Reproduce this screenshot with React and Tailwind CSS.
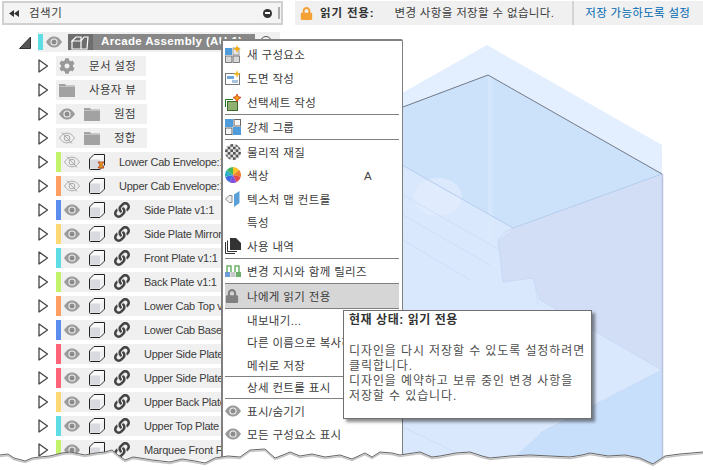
import { FaCog, FaLink, FaLock } from "react-icons/fa";

const componentRows = [
  { bar: "bg-[#c3f36b]", name: "Lower Cab Envelope:1", hidden: true, linked: false, pending: true },
  { bar: "bg-[#ff9e63]", name: "Upper Cab Envelope:1", hidden: true, linked: false },
  { bar: "bg-[#5b8def]", name: "Side Plate v1:1", linked: true },
  { bar: "bg-[#ffd876]", name: "Side Plate Mirror v1:1", linked: true },
  { bar: "bg-[#5edde5]", name: "Front Plate v1:1", linked: true },
  { bar: "bg-[#c3f36b]", name: "Back Plate v1:1", linked: true },
  { bar: "bg-[#ff9e63]", name: "Lower Cab Top v1:1", linked: true },
  { bar: "bg-[#5b8def]", name: "Lower Cab Base v1:1", linked: true },
  { bar: "bg-[#ff6478]", name: "Upper Side Plate v1:1", linked: true },
  { bar: "bg-[#ff6478]", name: "Upper Side Plate v1:2", linked: true },
  { bar: "bg-[#ffd876]", name: "Upper Back Plate v1:1", linked: true },
  { bar: "bg-[#5edde5]", name: "Upper Top Plate v1:1", linked: true },
  { bar: "bg-[#c3f36b]", name: "Marquee Front Panel v1:1", linked: true },
];

const tornEdge =
  "M0 455 L8 454 L14 458 L25 461 L32 458 L40 457 L50 456 L62 453 L70 452 L85 455 L96 453 L105 452 L112 450 L118 455 L125 460 L133 457 L140 458 L152 460 L170 462 L182 459 L195 461 L205 463 L215 458 L228 456 L240 457 L250 450 L265 449 L275 458 L283 455 L290 452 L300 456 L312 454 L325 457 L340 455 L352 459 L365 453 L372 457 L380 452 L392 453 L400 455 L420 452 L432 457 L440 456 L456 453 L470 452 L482 456 L490 458 L510 456 L530 455 L550 456 L570 457 L582 455 L590 453 L608 456 L625 455 L640 458 L653 464 L665 456 L680 454 L703 452";

function Eye() {
  return (
    <svg width="16" height="12" viewBox="0 0 16 12" className="shrink-0">
      <path d="M0 6 C3 1.5 5.5 0.5 8 0.5 C10.5 0.5 13 1.5 16 6 C13 10.5 10.5 11.5 8 11.5 C5.5 11.5 3 10.5 0 6Z" fill="#9b9b9b" />
      <circle cx="8" cy="6" r="3.6" fill="#f0f0f0" />
      <circle cx="8" cy="6" r="2.5" fill="#8c8c8c" />
    </svg>
  );
}

function EyeOff() {
  return (
    <svg width="16" height="12" viewBox="0 0 16 12" fill="none" stroke="#a8a8a8" strokeWidth="1" className="shrink-0">
      <path d="M0.6 6 C3 2.2 5.5 1.2 8 1.2 C10.5 1.2 13 2.2 15.4 6 C13 9.8 10.5 10.8 8 10.8 C5.5 10.8 3 9.8 0.6 6Z" />
      <circle cx="8" cy="6" r="2.8" />
      <path d="M3 0.5 L13 11.5" />
    </svg>
  );
}

function Folder() {
  return (
    <svg width="16" height="14" viewBox="0 0 16 14" className="shrink-0">
      <path d="M0 1 H6 L7 2.5 H16 V14 H0Z" fill="#a2a2a2" />
      <path d="M0 3.5 H16" stroke="#d0d0d0" strokeWidth="0.7" />
    </svg>
  );
}

function Cube({ pending }) {
  return (
    <svg width="16" height="16" viewBox="0 0 16 16" className="shrink-0">
      <path d="M0.5 5 L5 0.5 H15.5 V11 L11 15.5 H1.5 Q0.5 15.5 0.5 14.5Z" fill="#fafafa" stroke="#222" strokeWidth="1" />
      <path d="M1.2 5.5 H11 V14.8 H1.5 L1.2 14.5Z" fill="#d8dadf" />
      <path d="M11.5 5.5 L15 2 V10.5 L11.5 14Z" fill="#eef0f2" />
      {pending && <path d="M9 8 H15 L12.8 11 L15 14 H9 L11.2 11Z" fill="#e8a020" stroke="#b03010" strokeWidth="0.8" />}
    </svg>
  );
}

function Expand() {
  return (
    <svg width="11" height="14" viewBox="0 0 11 14" className="mr-[7px] shrink-0">
      <path d="M1 1 L9.5 7 L1 13Z" fill="#fff" stroke="#444" strokeWidth="1.3" strokeLinejoin="round" />
    </svg>
  );
}

function NewComponentIcon() {
  return (
    <svg width="16" height="18" viewBox="0 0 16 18">
      <rect x="0" y="3" width="7" height="7" fill="#4f9bdc" />
      <rect x="8" y="3" width="6" height="7" fill="#e8e8e8" stroke="#777" strokeWidth="0.7" />
      <rect x="0.4" y="11" width="6.5" height="6.5" fill="#d8d8d8" stroke="#666" strokeWidth="0.8" />
      <rect x="8" y="11" width="6.5" height="6.5" fill="#d8d8d8" stroke="#666" strokeWidth="0.8" />
      <path d="M12 0 L13 3 L16 4 L13 5 L12 8 L11 5 L8 4 L11 3Z" fill="#f8a800" />
    </svg>
  );
}

function DrawingIcon() {
  return (
    <svg width="16" height="16" viewBox="0 0 16 16">
      <rect x="0.5" y="3.5" width="14" height="11" fill="#fff" stroke="#777" />
      <rect x="2" y="6" width="7" height="3" fill="#6aa8de" />
      <rect x="7" y="10" width="6" height="3" fill="#a8c4dc" />
      <path d="M12 0 L13 3 L16 4 L13 5 L12 8 L11 5 L8 4 L11 3Z" fill="#f8b820" />
    </svg>
  );
}

function SelectionIcon() {
  return (
    <svg width="16" height="17" viewBox="0 0 16 17">
      <path d="M0.5 13 V5.5 H8" fill="none" stroke="#1c7a1c" />
      <rect x="2.5" y="7.5" width="10" height="9" fill="#8fb070" stroke="#3c6a2c" />
      <path d="M12 0 L13 2.5 L16 3.5 L13.5 5 L12 8 L10.5 5 L8 3.5 L11 2.5Z" fill="#f0a010" stroke="#d02010" strokeWidth="0.7" />
    </svg>
  );
}

function RigidIcon() {
  return (
    <svg width="16" height="16" viewBox="0 0 16 16">
      <rect x="0" y="0" width="8" height="8" fill="#4f9bdc" />
      <rect x="9" y="0.5" width="6.5" height="6.5" fill="#f4f4f4" stroke="#666" />
      <rect x="0.5" y="9" width="6.5" height="6.5" fill="#f4f4f4" stroke="#666" />
      <rect x="8" y="8" width="8" height="8" fill="#4f9bdc" />
    </svg>
  );
}

function CheckerIcon() {
  const cells = [];
  for (let y = 0; y < 6; y++) {
    for (let x = 0; x < 6; x++) {
      if ((x + y) % 2 === 0) cells.push(<rect key={`${x}-${y}`} x={x * 2.67} y={y * 2.67} width="2.67" height="2.67" fill="#555" />);
    }
  }
  return (
    <svg width="16" height="16" viewBox="0 0 16 16">
      <defs>
        <clipPath id="ball">
          <circle cx="8" cy="8" r="8" />
        </clipPath>
      </defs>
      <g clipPath="url(#ball)">
        <rect width="16" height="16" fill="#e4e4e4" />
        {cells}
      </g>
    </svg>
  );
}

function WheelIcon() {
  const wedges = ["#f8c020", "#f08030", "#e84848", "#8050d8", "#4068e0", "#30b0c0", "#40b860"];
  return (
    <svg width="16" height="16" viewBox="0 0 16 16">
      {wedges.map((c, i) => {
        const a0 = (i / 7) * Math.PI * 2 - Math.PI / 2;
        const a1 = ((i + 1) / 7) * Math.PI * 2 - Math.PI / 2;
        return <path key={c} d={`M8 8 L${8 + 8 * Math.cos(a0)} ${8 + 8 * Math.sin(a0)} A8 8 0 0 1 ${8 + 8 * Math.cos(a1)} ${8 + 8 * Math.sin(a1)}Z`} fill={c} />;
      })}
    </svg>
  );
}

function TextureIcon() {
  return (
    <svg width="16" height="16" viewBox="0 0 16 16">
      <path d="M0.5 8 L4 4.5 H7 V11.5 H4Z" fill="#eee" stroke="#888" />
      <path d="M9 3.5 L14.5 0 V12 L9 16Z" fill="#5a9fd8" />
    </svg>
  );
}

function HistoryIcon() {
  return (
    <svg width="16" height="16" viewBox="0 0 16 16">
      <path d="M0.5 4 V15.5 H10" fill="none" stroke="#333" />
      <path d="M2.5 2.5 V13.5 H12" fill="none" stroke="#333" />
      <path d="M5 0 H11 L16 5 V12 H5Z" fill="#333" />
    </svg>
  );
}

function ReleaseIcon() {
  return (
    <svg width="16" height="12" viewBox="0 0 16 12">
      <path d="M2 7 V1 H6 V7 M10 7 V1 H14 V7" fill="none" stroke="#6cb06c" strokeWidth="1.5" />
      <rect x="0" y="7" width="5" height="5" fill="#6c9cd8" />
      <rect x="5.5" y="7" width="5" height="5" fill="#c8c8c8" />
      <rect x="11" y="7" width="5" height="5" fill="#6cb06c" />
    </svg>
  );
}

function MenuItem({ icon, label, shortcut, height = "h-[24px]", active }) {
  return (
    <div className={`flex items-center ${height} ${active ? "bg-[#d6d6d6]" : ""}`}>
      <div className="flex w-[22px] shrink-0 items-center justify-start">{icon}</div>
      <span className="whitespace-nowrap pt-[3px]">{label}</span>
      {shortcut && <span className="ml-auto mr-[27px] pt-[3px] text-[#444]">{shortcut}</span>}
    </div>
  );
}

function Sep() {
  return <div className="h-px bg-[#808080]" />;
}

export default function App() {
  return (
    <div className="relative h-[470px] w-[703px] overflow-hidden bg-white font-['Liberation_Sans','Noto_Sans_CJK_KR',sans-serif] text-[11.5px] text-[#3c3c3c]">
      {/* 3D view behind the browser */}
      <svg width="703" height="470" className="absolute left-0 top-0">
        <path d="M395 97 L487 45 L662 145 V174 L488 75 L395 111Z" fill="#e3efff" />
        <path d="M395 110 L488 75 L662 174 L513 228 L395 161Z" fill="#cce2fa" />
        <path d="M395 161 L513 228 L498 240 L503 282 L533 278 L540 300 L662 370 L540 433 L500 470 H395Z" fill="#dae8fe" />
        <path d="M513 228 L662 174 V370 L540 300 L533 278 L503 282 L498 240Z" fill="#d2ddf6" />
        <path d="M662 370 V470 H500 L540 433Z" fill="#c8dffb" />
        <rect x="488" y="75" width="5" height="165" fill="#dbeafc" opacity="0.45" />
        <ellipse cx="438" cy="197" rx="24" ry="19" fill="#e2edfe" opacity="0.7" />
        <path d="M395 161 L513 228 L662 174" fill="none" stroke="#b4ccee" strokeWidth="1" />
        <path d="M513 228 L505 232 L498 240 L503 282 L533 278 L540 300 L662 370 L540 433" fill="none" stroke="#c4d6f2" strokeWidth="0.8" />
        <path d="M403 195 L500 250 M403 215 L490 265 M403 240 L470 280 M403 427 L457 453 M535 285 L538 305" fill="none" stroke="#c9dcf8" strokeWidth="0.8" />
        <path d="M395 110 L488 75 L662 174" fill="none" stroke="#555a6a" strokeWidth="0.8" />
        <path d="M662.5 174 V470" stroke="#b8c4de" strokeWidth="1.5" />
      </svg>

      {/* top bars */}
      <div className="relative flex h-[25px] items-stretch pt-px pl-[2px]">
        <div className="flex w-[281px] items-center border-2 border-[#d0d0d0] bg-[#f4f4f4] pl-[5px]">
          <svg width="10" height="7" viewBox="0 0 10 7" className="shrink-0">
            <path d="M0 3.5 L5 0 V7Z M5 3.5 L10 0 V7Z" fill="#333" />
          </svg>
          <span className="ml-[10px] pt-[2px] tracking-[0.5px]">검색기</span>
          <span className="ml-auto flex h-[9px] w-[9px] items-center justify-center rounded-full bg-[#333]">
            <span className="h-[2px] w-[5px] bg-white" />
          </span>
          <span className="ml-[6px] mr-[1px] h-[12px] w-[2px] border-x border-[#aaa]" />
        </div>
        <div className="ml-[12px] flex flex-1 items-center bg-[#f0f0f0] pl-[5px]">
          <FaLock className="text-[#f5a033]" size={13} />
          <span className="ml-[7px] pt-[2px] font-bold tracking-[0.85px] text-[#333]">읽기 전용:</span>
          <span className="ml-[20px] pt-[2px] tracking-[0.35px]">변경 사항을 저장할 수 없습니다.</span>
          <span className="ml-[18px] h-full w-[2px] bg-[#d4d4d4]" />
          <span className="ml-[11px] pt-[2px] tracking-[0.3px] text-[#0068b0]">저장 가능하도록 설정</span>
        </div>
      </div>

      {/* browser tree */}
      <div className="relative flex w-[280px] flex-col gap-[4px] pt-[7px]">
        <div className="flex h-[20px] items-center pl-[19px]">
          <svg width="12" height="13" viewBox="0 0 12 13" className="mr-[7px] shrink-0">
            <path d="M0.5 12.5 L11.5 1 V12.5Z" fill="#555" stroke="#333" />
          </svg>
          <div className="flex h-full flex-1 items-center bg-[#f0f0f0]">
            <span className="h-[16px] w-[5px] bg-[#5edde5]" />
            <span className="ml-[3px]">
              <Eye />
            </span>
            <div className="ml-[6px] flex h-[16px] w-[187px] items-center bg-[#888888] text-[11.5px] font-bold tracking-[0.35px] text-white">
              <svg width="25" height="16" viewBox="0 0 25 16" className="shrink-0 bg-[#6e6e6e]">
                <path d="M4 7 L8 3 H13 V7 H4Z M4 7 V15 H13 V7 M13 7 L16 3 M16 3 H20 L19 15 H13" fill="none" stroke="#fff" strokeWidth="1.2" />
              </svg>
              <span className="ml-[8px] whitespace-nowrap">Arcade Assembly (AU:1)</span>
            </div>
            <span className="ml-[5px] h-[12px] w-[12px] rounded-full border border-[#555]" />
          </div>
        </div>

        <div className="flex h-[20px] items-center pl-[38px]">
          <Expand />
          <div className="flex h-full w-[90px] items-center bg-[#f0f0f0] pl-[3px]">
            <FaCog className="text-[#999]" size={16} />
            <span className="ml-[14px] pt-[2px] tracking-[0.3px]">문서 설정</span>
          </div>
        </div>
        <div className="flex h-[20px] items-center pl-[38px]">
          <Expand />
          <div className="flex h-full w-[90px] items-center bg-[#f0f0f0] pl-[3px]">
            <Folder />
            <span className="ml-[14px] pt-[2px] tracking-[0.3px]">사용자 뷰</span>
          </div>
        </div>
        <div className="flex h-[20px] items-center pl-[38px]">
          <Expand />
          <div className="flex h-full w-[91px] items-center bg-[#f0f0f0] pl-[3px]">
            <Eye />
            <span className="ml-[9px]">
              <Folder />
            </span>
            <span className="ml-[14px] pt-[2px] tracking-[0.3px]">원점</span>
          </div>
        </div>
        <div className="flex h-[20px] items-center pl-[38px]">
          <Expand />
          <div className="flex h-full w-[91px] items-center bg-[#f0f0f0] pl-[3px]">
            <EyeOff />
            <span className="ml-[9px]">
              <Folder />
            </span>
            <span className="ml-[14px] pt-[2px] tracking-[0.3px]">정합</span>
          </div>
        </div>

        {componentRows.map((row) => (
          <div key={row.name} className="flex h-[20px] items-center pl-[38px]">
            <Expand />
            <div className="flex h-full flex-1 items-center whitespace-nowrap bg-[#f0f0f0] text-[11px] tracking-[-0.25px]">
              <span className={`h-full w-[5px] shrink-0 ${row.bar}`} />
              <span className="ml-[3px]">{row.hidden ? <EyeOff /> : <Eye />}</span>
              <span className="ml-[9px]">
                <Cube pending={row.pending} />
              </span>
              {row.linked && <FaLink className="ml-[9px] shrink-0 text-[#444]" size={16} />}
              <span className="ml-[14px]">{row.name}</span>
            </div>
          </div>
        ))}
      </div>

      {/* context menu */}
      <div className="absolute left-[221px] top-[39px] h-[440px] w-[182px] rounded-[2px] border-2 border-[#808080] border-r-[1px] bg-white pl-[2px] pr-[3px] pt-px tracking-[0.35px]">
        <MenuItem icon={<NewComponentIcon />} label="새 구성요소" />
        <MenuItem icon={<DrawingIcon />} label="도면 작성" />
        <MenuItem icon={<SelectionIcon />} label="선택세트 작성" />
        <Sep />
        <MenuItem icon={<RigidIcon />} label="강체 그룹" />
        <Sep />
        <MenuItem icon={<CheckerIcon />} label="물리적 재질" height="h-[23.6px]" />
        <MenuItem icon={<WheelIcon />} label="색상" shortcut="A" height="h-[23.6px]" />
        <MenuItem icon={<TextureIcon />} label="텍스처 맵 컨트롤" height="h-[23.6px]" />
        <MenuItem label="특성" height="h-[23.6px]" />
        <MenuItem icon={<HistoryIcon />} label="사용 내역" height="h-[23.6px]" />
        <Sep />
        <MenuItem icon={<ReleaseIcon />} label="변경 지시와 함께 릴리즈" />
        <Sep />
        <MenuItem icon={<FaLock className="text-[#808080]" size={14} />} label="나에게 읽기 전용" active />
        <Sep />
        <MenuItem label="내보내기..." height="h-[22.3px]" />
        <MenuItem label="다른 이름으로 복사하기" height="h-[22.3px]" />
        <MenuItem label="메쉬로 저장" height="h-[22.3px]" />
        <Sep />
        <MenuItem label="상세 컨트롤 표시" height="h-[21px]" />
        <Sep />
        <MenuItem icon={<Eye />} label="표시/숨기기" />
        <MenuItem icon={<Eye />} label="모든 구성요소 표시" height="h-[23px]" />
      </div>

      {/* tooltip */}
      <div className="absolute left-[343px] top-[310px] h-[109px] w-[249px] border border-[#707070] bg-white px-[5px] pt-[2px] text-[12px] leading-[15.3px] tracking-[0.9px] text-[#505050] shadow-[3px_3px_3px_rgba(0,0,0,0.45)]">
        <p className="font-bold tracking-[0.55px] text-[#333]">현재 상태: 읽기 전용</p>
        <p className="mt-[15.3px]">디자인을 다시 저장할 수 있도록 설정하려면 클릭합니다.</p>
        <p>디자인을 예약하고 보류 중인 변경 사항을 저장할 수 있습니다.</p>
      </div>

      {/* torn screenshot edge */}
      <svg width="703" height="470" className="pointer-events-none absolute left-0 top-0">
        <path d={`${tornEdge} V470 H0Z`} fill="#fff" />
        <path d={tornEdge} transform="translate(0 1.5)" fill="none" stroke="#c4c4c4" strokeWidth="1.5" />
        <path d={tornEdge} fill="none" stroke="#666" strokeWidth="1" />
      </svg>
    </div>
  );
}
